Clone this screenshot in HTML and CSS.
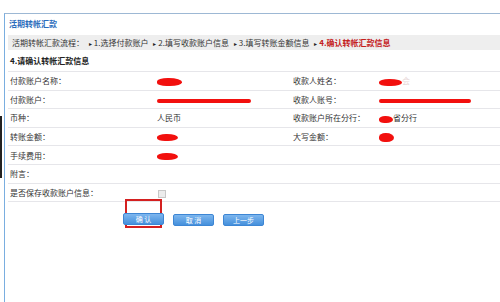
FILE: index.html
```html
<!DOCTYPE html>
<html lang="zh-CN">

<head>
    <meta charset="UTF-8">
    <title>活期转帐汇款</title>
    <link rel="stylesheet" href="styles.css">
</head>

<body>
    <div class="edge"></div>
    <div class="main">
        <div class="title">活期转帐汇款</div>

        <div class="steps">
            <span>活期转帐汇款流程：</span>
            <span class="arrow">&#9656;</span><span>1.选择付款账户</span>
            <span class="arrow">&#9656;</span><span>2.填写收款账户信息</span>
            <span class="arrow">&#9656;</span><span>3.填写转账金额信息</span>
            <span class="arrow">&#9656;</span><span class="current">4.确认转帐汇款信息</span>
        </div>

        <div class="section">4.请确认转帐汇款信息</div>

        <table class="info">
            <tr>
                <td class="c1">付款账户名称：</td>
                <td class="c2"><span class="blot b-name"></span></td>
                <td class="c3">收款人姓名：</td>
                <td class="c4"><span class="blot b-name2"></span><span class="faint">会</span></td>
            </tr>
            <tr>
                <td>付款账户：</td>
                <td><span class="line l-acc"></span></td>
                <td>收款人账号：</td>
                <td><span class="line l-acc2"></span></td>
            </tr>
            <tr>
                <td>币种：</td>
                <td>人民币</td>
                <td>收款账户所在分行：</td>
                <td><span class="blot b-bank"></span>省分行</td>
            </tr>
            <tr>
                <td>转账金额：</td>
                <td><span class="blot b-amt"></span></td>
                <td>大写金额：</td>
                <td><span class="blot b-big"></span></td>
            </tr>
            <tr>
                <td>手续费用：</td>
                <td><span class="blot b-amt"></span></td>
                <td></td>
                <td></td>
            </tr>
            <tr>
                <td>附言：</td>
                <td></td>
                <td></td>
                <td></td>
            </tr>
            <tr>
                <td>是否保存收款账户信息：</td>
                <td><span class="check"></span></td>
                <td></td>
                <td></td>
            </tr>
        </table>

        <div class="actions">
            <div class="mark">
                <button type="button">确 认</button>
            </div>
            <button type="button">取 消</button>
            <button type="button">上一步</button>
        </div>
    </div>
</body>

</html>
```

FILE: styles.css
```css
* {
    box-sizing: border-box;
}

html,
body {
    margin: 0;
    padding: 0;
    background: #fff;
}

body {
    position: relative;
    height: 302px;
    overflow: hidden;
    font-family: "Noto Sans CJK SC", "Liberation Sans", sans-serif;
    font-size: 8px;
    color: #333;
}

.edge {
    position: absolute;
    left: 0;
    top: 116px;
    width: 2px;
    height: 62px;
    background: #222;
}

.main {
    margin: 13px 0 0 4px;
    height: 289px;
    border-top: 1px solid #9db8d4;
    border-left: 1px solid #7aaee0;
    padding-left: 3px;
}

.title {
    height: 21px;
    line-height: 20px;
    font-size: 8px;
    font-weight: bold;
    color: #2a6cbc;
    padding-left: 1px;
}

.steps {
    height: 15px;
    line-height: 15px;
    background: #eeeeee;
    padding-left: 4px;
    white-space: nowrap;
}

.steps .arrow {
    font-size: 6px;
    color: #222;
    margin: 0 2px 0 3px;
}

.steps .current {
    color: #c4201c;
    font-weight: bold;
}

.section {
    height: 21px;
    line-height: 22px;
    padding-left: 2px;
    font-weight: bold;
    color: #222;
}

.info {
    width: 100%;
    border-collapse: collapse;
    border-top: 1px solid #e6e6ea;
}

.info td {
    height: 18.6px;
    padding: 0 0 0 2px;
    border-bottom: 1px solid #e6e6ea;
    vertical-align: middle;
    white-space: nowrap;
}

.info .c1 {
    width: 147px;
}

.info .c2 {
    width: 136px;
}

.info .c3 {
    width: 86px;
}

.blot {
    display: inline-block;
    vertical-align: middle;
    background: #f2100e;
    border-radius: 45% 55% 50% 40%;
}

.b-name {
    width: 25px;
    height: 8px;
}

.b-name2 {
    width: 23px;
    height: 7px;
}

.b-amt {
    width: 21px;
    height: 7px;
}

.b-big {
    width: 15px;
    height: 9px;
}

.b-bank {
    width: 14px;
    height: 7px;
}

.faint {
    color: #e8d8d8;
}

.line {
    display: inline-block;
    vertical-align: middle;
    height: 4px;
    background: #f2100e;
    border-radius: 3px;
}

.l-acc {
    width: 94px;
}

.l-acc2 {
    width: 92px;
}

.check {
    display: inline-block;
    vertical-align: middle;
    width: 8px;
    height: 8px;
    margin-left: 1px;
    border: 1px solid #c8c8c8;
    background: #ececec;
}

.actions {
    display: flex;
    align-items: center;
    gap: 9px;
    padding-left: 115px;
    margin-top: 10px;
}

.mark {
    border: 2px solid #d42020;
    padding: 12px 0 1px 0;
    margin: -13px 2px 0 2px;
    width: 37px;
    display: flex;
    justify-content: center;
}

button {
    flex: none;
    width: 41px;
    height: 12px;
    padding: 0;
    border: 1px solid #3d86d4;
    border-radius: 2px;
    background: linear-gradient(#7db6ee, #4590dc);
    color: #fff;
    font-family: "Noto Sans CJK SC", "Liberation Sans", sans-serif;
    font-size: 7px;
    line-height: 10px;
}

.mark button {
    margin: 0 -4px;
}
```
